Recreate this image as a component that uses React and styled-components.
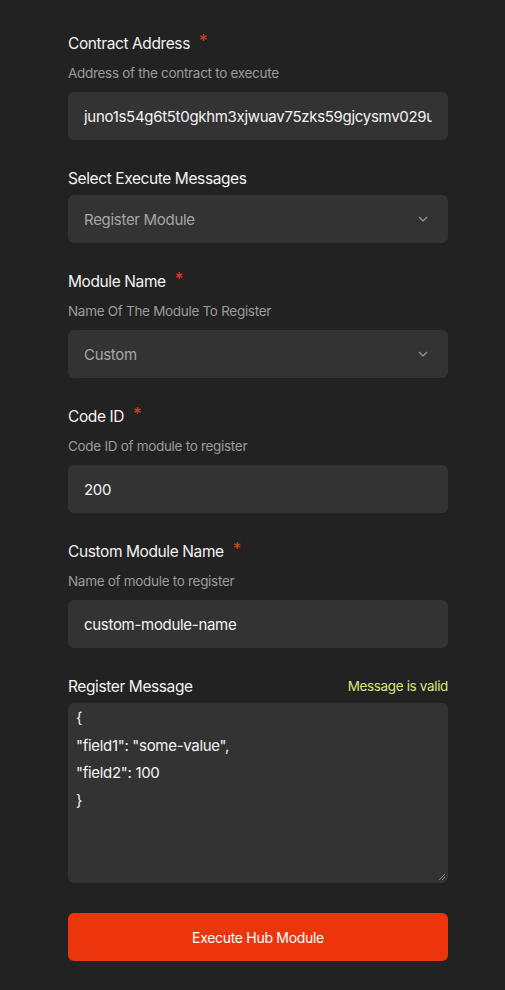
import React from "react";
import styled, { createGlobalStyle } from "styled-components";

const Global = createGlobalStyle`
  html, body { margin: 0; padding: 0; background: #222222; }
  body { font-family: Inter, "Noto Sans", sans-serif; -webkit-font-smoothing: antialiased; }
  * { box-sizing: border-box; }
`;

const Page = styled.div`
  width: 505px;
  min-height: 990px;
  background: #222222;
  padding: 33px 57px 29px 68px;
  display: flex;
  flex-direction: column;
`;

const Field = styled.div`
  display: flex;
  flex-direction: column;
  margin-bottom: ${(p) => p.$mb ?? 28}px;
`;

const LabelRow = styled.div`
  display: flex;
  align-items: center;
  justify-content: space-between;
  height: 20px;
  margin-bottom: ${(p) => p.$mb ?? 0}px;
`;

const Label = styled.label`
  color: #f2f2f2;
  font-size: 15.5px;
  font-weight: 400;
  letter-spacing: -0.4px;
  display: flex;
  align-items: center;
`;

const Star = styled.span`
  color: #d8431c;
  font-size: 17px;
  margin-left: 9px;
  position: relative;
  top: -2px;
`;

const Valid = styled.span`
  color: #d3ea7d;
  font-size: 13.5px;
  letter-spacing: -0.35px;
`;

const Desc = styled.div`
  color: #9b9b9b;
  font-size: 13.5px;
  letter-spacing: -0.3px;
  line-height: 18px;
  margin: 11px 0 10px;
`;

const Box = styled.div`
  height: 48px;
  background: #333333;
  border-radius: 6px;
  display: flex;
  align-items: center;
  padding: 0 16px;
  overflow: hidden;
  white-space: nowrap;
  font-size: 15px;
  letter-spacing: -0.3px;
  color: ${(p) => (p.$muted ? "#a6a6a6" : "#f4f4f4")};
`;

const BoxText = styled.span`
  flex: 1;
  overflow: hidden;
`;

const Chevron = styled.svg`
  width: 10px;
  height: 6px;
  margin-right: 4px;
  flex: none;
`;

const TextArea = styled.div`
  position: relative;
  height: 180px;
  background: #333333;
  border-radius: 6px;
  padding: 1px 8px 0;
  color: #f4f4f4;
  font-size: 15px;
  letter-spacing: -0.3px;
  line-height: 27.5px;
  white-space: pre;
`;

const Grip = styled.svg`
  position: absolute;
  right: 2px;
  bottom: 2px;
  width: 8px;
  height: 8px;
`;

const Button = styled.button`
  height: 48px;
  width: 100%;
  border: none;
  border-radius: 6px;
  background: #eb360d;
  color: #ffffff;
  font-family: inherit;
  font-size: 14px;
  font-weight: 400;
  letter-spacing: -0.3px;
`;

const Select = ({ value }) => (
  <Box $muted>
    <BoxText>{value}</BoxText>
    <Chevron viewBox="0 0 10 6">
      <path d="M1 1l4 4 4-4" fill="none" stroke="#9a9a9a" strokeWidth="1.2" />
    </Chevron>
  </Box>
);

export default function App() {
  return (
    <>
      <Global />
      <Page>
        <Field>
          <LabelRow>
            <Label>
              Contract Address<Star>*</Star>
            </Label>
          </LabelRow>
          <Desc>Address of the contract to execute</Desc>
          <Box>
            <BoxText>juno1s54g6t5t0gkhm3xjwuav75zks59gjcysmv029uqt6h4md6m3hxv93skdvn3h</BoxText>
          </Box>
        </Field>

        <Field>
          <LabelRow $mb={7}>
            <Label>Select Execute Messages</Label>
          </LabelRow>
          <Select value="Register Module" />
        </Field>

        <Field>
          <LabelRow>
            <Label>
              Module Name<Star>*</Star>
            </Label>
          </LabelRow>
          <Desc>Name Of The Module To Register</Desc>
          <Select value="Custom" />
        </Field>

        <Field>
          <LabelRow>
            <Label>
              Code ID<Star>*</Star>
            </Label>
          </LabelRow>
          <Desc>Code ID of module to register</Desc>
          <Box>
            <BoxText>200</BoxText>
          </Box>
        </Field>

        <Field>
          <LabelRow>
            <Label>
              Custom Module Name<Star>*</Star>
            </Label>
          </LabelRow>
          <Desc>Name of module to register</Desc>
          <Box>
            <BoxText>custom-module-name</BoxText>
          </Box>
        </Field>

        <Field $mb={30}>
          <LabelRow $mb={7}>
            <Label>Register Message</Label>
            <Valid>Message is valid</Valid>
          </LabelRow>
          <TextArea>
            {'{\n"field1": "some-value",\n"field2": 100\n}'}
            <Grip viewBox="0 0 8 8">
              <path d="M7 1L1 7M7 4L4 7" stroke="#8a8a8a" strokeWidth="1" />
            </Grip>
          </TextArea>
        </Field>

        <Button>Execute Hub Module</Button>
      </Page>
    </>
  );
}
